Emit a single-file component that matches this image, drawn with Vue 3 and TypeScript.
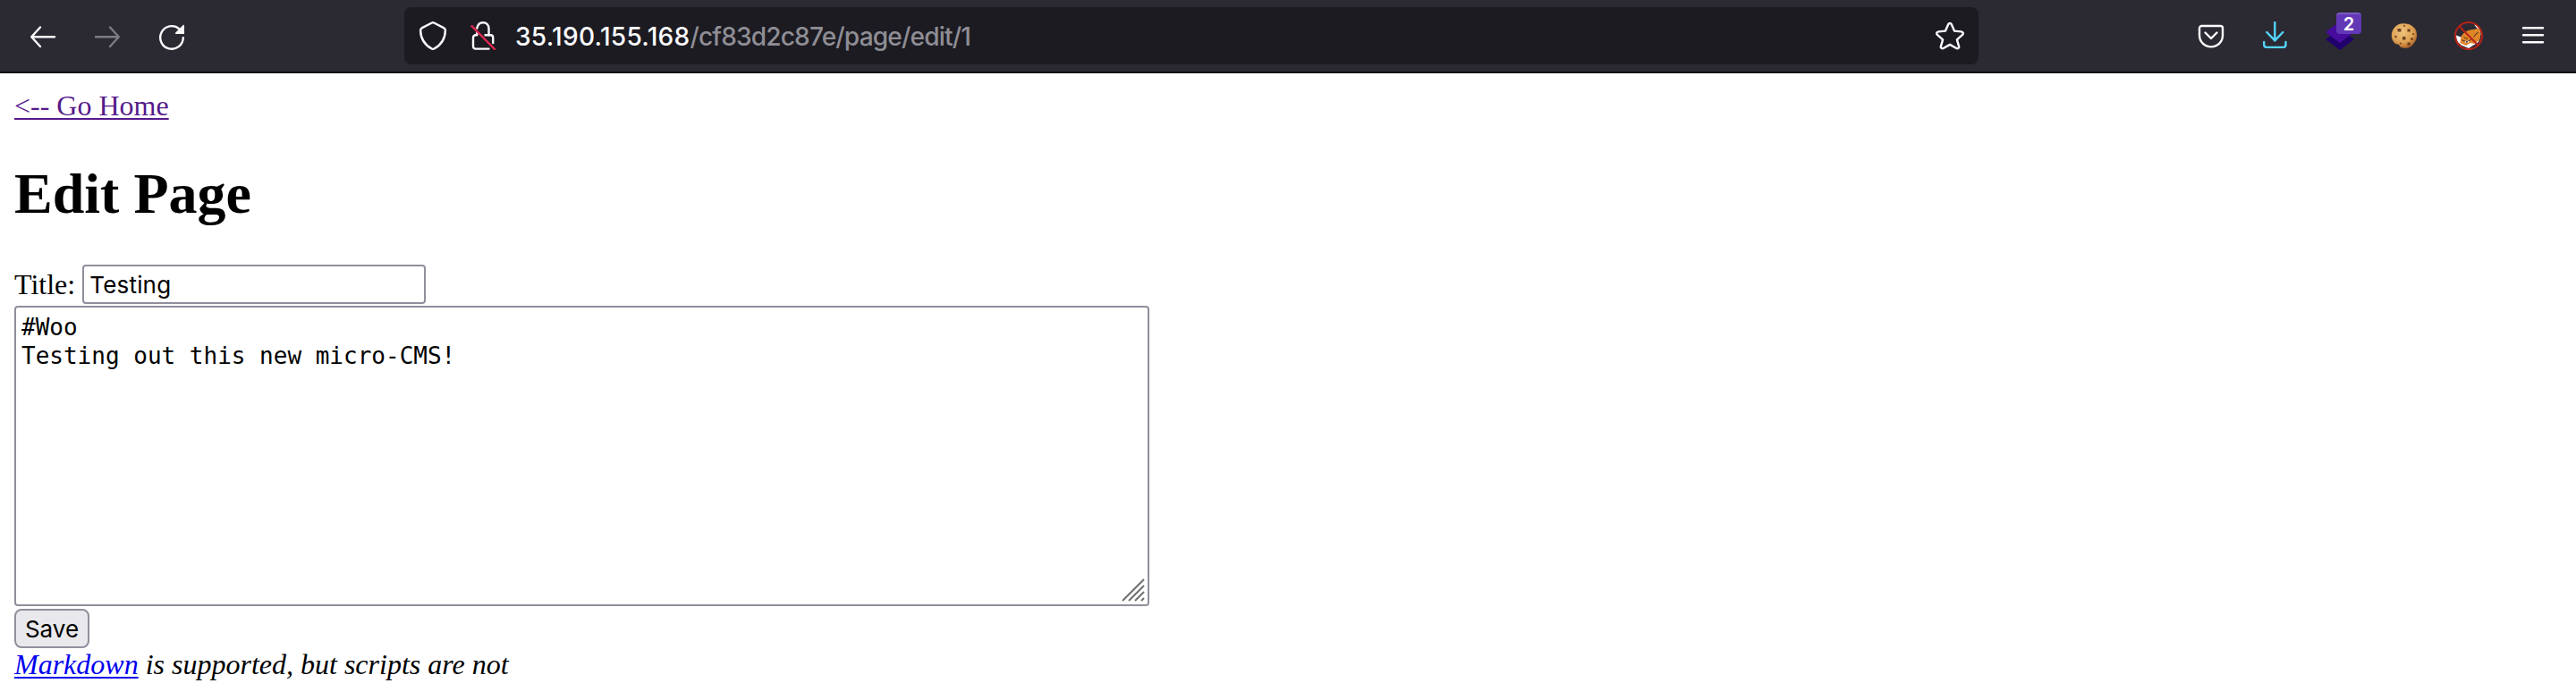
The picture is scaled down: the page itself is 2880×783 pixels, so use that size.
<script setup lang="ts">
import { ref } from 'vue'

const host = '35.190.155.168'
const path = '/cf83d2c87e/page/edit/1'
const title = ref('Testing')
const body = ref('#Woo\nTesting out this new micro-CMS!')
const badge = 2
</script>

<template>
  <div class="window">
    <header class="toolbar">
      <nav class="nav">
        <svg class="icon" viewBox="0 0 32 32"><path d="M29 17.3H3.5M13 6.5 3.2 17.3 13 28" /></svg>
        <svg class="icon dim" viewBox="0 0 32 32"><path d="M3 17.3h25.5M19 6.5l9.8 10.8L19 28" /></svg>
        <svg class="icon" viewBox="0 0 32 32">
          <path d="M28.8 18.2A12.8 12.8 0 1 1 24.4 8.3" />
          <path class="solid" d="M30 4.6V14H20.8c-.9 0-1.2-.9-.6-1.5l8.3-8.3c.6-.6 1.5-.4 1.5.4z" />
        </svg>
      </nav>
      <div class="urlbar">
        <svg class="icon" viewBox="0 0 32 32">
          <path d="M14.9 1.5a2.500 2.500 0 0 1 2.200 0L28 7.100c1.300.7 1.900 1.500 1.900 2.800C29.700 19.300 25.500 26 17.300 30.500a2.600 2.600 0 0 1-2.600 0C6.500 26 2.300 19.300 2.100 9.900 2.100 8.600 2.700 7.800 4 7.100z" />
        </svg>
        <svg class="icon lock" viewBox="0 0 32 32">
          <path d="M9.300 7.500C10 3.800 12.600 1.200 16 1.200c3.900 0 6.500 2.900 6.500 6.800v7.200" />
          <path d="M18.500 15.300h6a2.700 2.700 0 0 1 2.700 2.700v6M22.500 30.600H7.700A2.700 2.700 0 0 1 5 27.900V18a2.700 2.700 0 0 1 2.700-2.700H9.300V12" />
          <path class="slash" d="M3.500 5.200 29 31" />
        </svg>
        <div class="address"><span class="host">{{ host }}</span><span class="path">{{ path }}</span></div>
        <svg class="icon star" viewBox="0 0 32 32">
          <path d="M14.300 3.100c.700-1.500 2.700-1.500 3.400 0l3.300 7.500 7.800.8c1.900.2 2.600 2.200 1.300 3.400l-6.200 5.500 2.200 7.600c.5 1.700-1.200 2.900-2.800 2.100L16 25.900 8.700 30c-1.600.8-3.300-.4-2.800-2.100l2.200-7.600-6.200-5.500c-1.300-1.200-.6-3.200 1.300-3.400l7.800-.8z" />
        </svg>
      </div>
      <div class="actions">
        <svg class="icon" viewBox="0 0 32 32">
          <path d="M5.500 5h21A2.500 2.500 0 0 1 29 7.500v8a13 12.900 0 0 1-26 0v-8A2.500 2.500 0 0 1 5.500 5z" />
          <path d="M9.500 12.500 16 19l6.500-6.500" />
        </svg>
        <svg class="icon download" viewBox="0 0 32 32">
          <path d="M15.300 1v20.500M6.300 12l9 9.300 9-9.300M3.200 23v3c0 2 1 2.900 2.900 2.900h18.500c1.900 0 2.900-.9 2.900-2.900v-3" />
        </svg>
        <div class="extension">
          <svg class="icon art" viewBox="0 0 32 32">
            <path fill="#20006c" d="M0 20 16 8l16 12-16 12z" />
            <path fill="#470b9d" d="M0 12 16 0l16 12-16 12z" />
          </svg>
          <span class="badge">{{ badge }}</span>
        </div>
        <svg class="icon art" viewBox="0 0 32 32">
          <defs>
            <radialGradient id="dough" cx=".42" cy=".35" r=".7">
              <stop offset="0" stop-color="#f0c57f" />
              <stop offset=".62" stop-color="#dca052" />
              <stop offset="1" stop-color="#a85c20" />
            </radialGradient>
          </defs>
          <path fill="url(#dough)" d="M15 2.200c4 0 8 .7 10.500 3.500C29 8 29.800 11 30 15c.2 4-1.200 7-3.500 9.500C24 28.500 21 29.800 17 29.700c-2 0-4-.2-5.500-1.200-1-.8-.7-2-2-2.700-1.500-.8-3 .2-4-1.300C3 22 2 19.500 1.800 16 1.600 12 3 9 5.500 6.200 8 3.500 11 2.200 15 2.200z" />
          <g fill="#6f4120">
            <path d="M8.500 8h4v3.500h-4zM19.500 8.500h3.200v3H19.500zM14 17h3.500v3.500H14zM19.500 23.500h3.300v3.300h-3.300z" />
            <circle cx="6.500" cy="17" r="1.200" /><circle cx="24.500" cy="19.500" r="1.500" />
            <circle cx="12" cy="24.500" r="1" /><circle cx="26" cy="14" r="1" /><circle cx="16" cy="5" r="1" />
          </g>
        </svg>
        <svg class="icon art" viewBox="0 0 32 32">
          <path fill="#fff" d="M2 15.500 9 18l16-10-3-4.500C26 4 29 8 29.500 14L27 23l-11 7-9.500-4C3.500 23 1.800 19.500 2 15.500z" />
          <path fill="#df8427" d="M7.500 17C10 12 15 9.500 21 9l6-1.500c2.500 3 3 8 1 13.500l-6 4-4-1-5 3-6.500-3z" />
          <path fill="#2b2a33" d="m22 4 4 4-7 .5zM3.500 24l3 1 1 4z" />
          <path d="m22 17 2-3 2.500-1.500M11 18l3.500 1.500M9 21l5 2 5-3" fill="none" stroke="#493025" stroke-width="1" />
          <path fill="#fff" d="m11 23 3-1.500 3 1-2.500 1.500z" />
          <circle cx="14" cy="22.700" r="1" fill="#292832" />
          <g fill="none" stroke="#b92218" stroke-width="2"><circle cx="16" cy="16" r="15" /><path d="m5.500 5.500 21 21" /></g>
        </svg>
        <svg class="icon" viewBox="0 0 32 32"><path d="M5 7.300h22M5 15.300h22M5 23.300h22" /></svg>
      </div>
    </header>

    <main class="page">
      <a class="home" href="#">&lt;-- Go Home</a>
      <h1>Edit Page</h1>
      <form @submit.prevent>
        <div class="title-row">
          <label for="title">Title:</label>
          <input id="title" v-model="title" type="text" />
        </div>
        <div class="editor">
          <textarea v-model="body" spellcheck="false"></textarea>
          <svg class="grip" viewBox="0 0 26 26"><path d="M1 25 25 1M8 25 25 8M15 25l10-10M22 25l3-3" /></svg>
        </div>
        <button type="submit">Save</button>
      </form>
      <p class="note"><a href="#">Markdown</a> is supported, but scripts are not</p>
    </main>
  </div>
</template>

<style>
body {
  margin: 0;
  background: #fff;
}
</style>

<style scoped>
.window {
  height: 783px;
  overflow: hidden;
  color: #000;
}
.toolbar {
  box-sizing: border-box;
  height: 82px;
  padding: 0 32px;
  display: flex;
  align-items: center;
  background: #2b2a33;
  border-bottom: 2px solid #0c0c0d;
}
.nav,
.actions {
  display: flex;
  gap: 40px;
}
.actions {
  margin-left: auto;
}
.icon {
  display: block;
  flex: none;
  width: 32px;
  height: 32px;
  fill: none;
  stroke: #fbfbfe;
  stroke-width: 2.4;
  stroke-linecap: round;
  stroke-linejoin: round;
}
.icon.dim {
  stroke: #7d7c83;
}
.icon .solid {
  fill: #fbfbfe;
  stroke: none;
}
.icon.download {
  stroke: #54d5fb;
}
.icon.art {
  stroke: none;
}
.slash {
  stroke: #e22850;
}
.urlbar {
  box-sizing: border-box;
  width: 1760px;
  height: 64px;
  margin-left: 244px;
  padding: 0 16px;
  display: flex;
  align-items: center;
  border-radius: 8px;
  background: #1c1b22;
}
.lock {
  margin-left: 24px;
}
.star {
  margin-left: auto;
}
.address {
  margin-left: 20px;
  padding-top: 2px;
  font: 500 28px/36px Inter, sans-serif;
  white-space: nowrap;
}
.host {
  color: #fbfbfe;
  letter-spacing: 0.3px;
}
.path {
  color: #8f8e95;
  letter-spacing: -0.8px;
}
.extension {
  position: relative;
}
.badge {
  position: absolute;
  box-sizing: border-box;
  left: 12px;
  top: -10px;
  width: 28px;
  height: 24px;
  border-top: 2px solid #7c59c4;
  border-radius: 4px;
  background: #6338b6;
  color: #fff;
  font: 600 20px/23px Inter, sans-serif;
  text-align: center;
}
.page {
  padding: 18px 16px 0;
  font: 32px/36px 'Liberation Serif', serif;
}
.home {
  display: block;
  width: max-content;
  color: #551a8b;
  text-decoration-thickness: 2px;
  text-underline-offset: 3px;
}
h1 {
  margin: 43px 0 41px;
  font-size: 64px;
  line-height: 76px;
  font-weight: bold;
}
.title-row {
  display: flex;
  align-items: center;
  gap: 8px;
  height: 44px;
}
input,
textarea {
  box-sizing: border-box;
  margin: 0;
  border: 2px solid #8f8f9d;
  border-radius: 4px;
  background: #fff;
  color: #000;
  outline: none;
}
input {
  width: 384px;
  height: 44px;
  padding: 2px 6px;
  font: 26px Inter, sans-serif;
  letter-spacing: 0.2px;
}
.editor {
  position: relative;
  width: 1269px;
  height: 336px;
  margin-top: 2px;
}
textarea {
  display: block;
  width: 100%;
  height: 100%;
  padding: 6px 6px;
  resize: none;
  overflow: hidden;
  font: 26px/32px 'DejaVu Sans Mono', monospace;
}
.grip {
  position: absolute;
  right: 5px;
  bottom: 5px;
  width: 26px;
  height: 26px;
  fill: none;
  stroke: #707070;
  stroke-width: 2;
}
button {
  display: block;
  box-sizing: border-box;
  width: 84px;
  height: 44px;
  margin: 3px 0 0;
  padding: 0;
  border: 2px solid #8f8f9d;
  border-radius: 8px;
  background: #e9e9ed;
  color: #000;
  font: 26px Inter, sans-serif;
}
.note {
  margin: 0;
  font-style: italic;
}
.note a {
  color: #0000ee;
  text-decoration-thickness: 2px;
  text-underline-offset: 3px;
}
</style>
